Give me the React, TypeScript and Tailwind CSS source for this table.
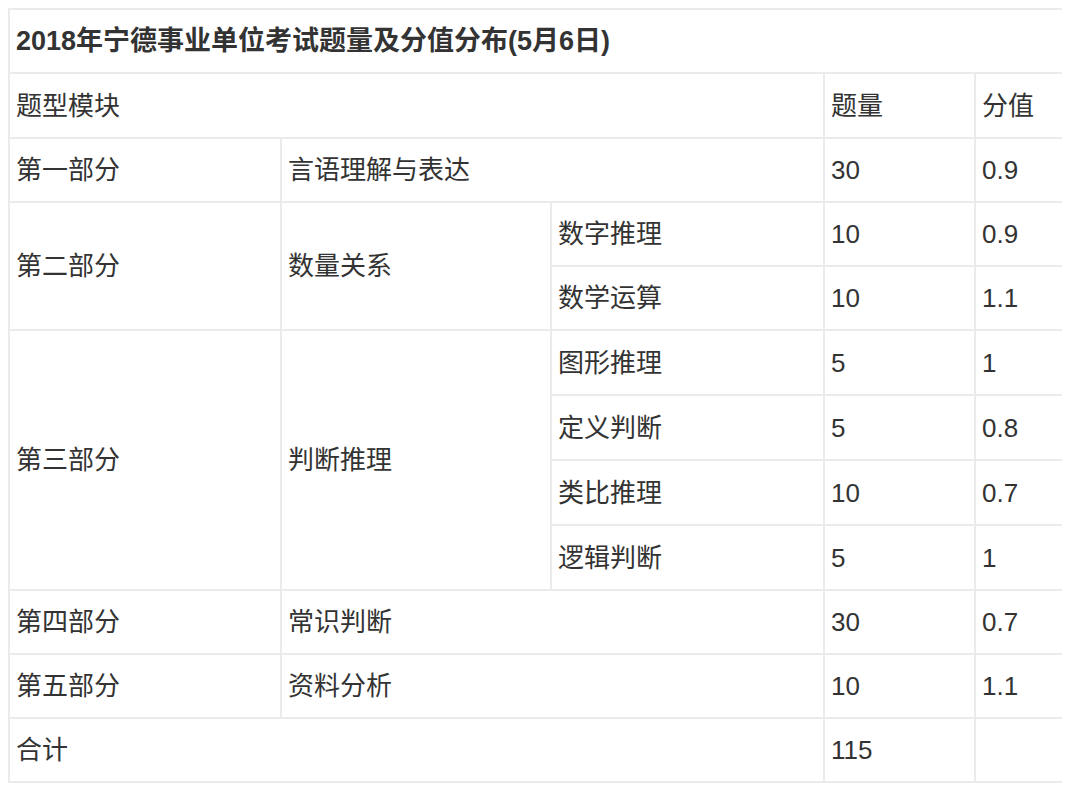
const cell = "border-2 border-[#ebebeb] px-[6px] align-middle text-left font-normal";
const last = "border-2 border-r-0 border-[#ebebeb] px-[6px] align-middle text-left font-normal";

type Row = { sub: string; count: string; score: string };

const reasoning: Row[] = [
  { sub: "图形推理", count: "5", score: "1" },
  { sub: "定义判断", count: "5", score: "0.8" },
  { sub: "类比推理", count: "10", score: "0.7" },
  { sub: "逻辑判断", count: "5", score: "1" },
];

export default function App() {
  return (
    <div className="min-h-screen bg-white pl-2 pt-2">
      <table
        className="w-[1054px] table-fixed border-collapse border-r-0 text-[26px] leading-none text-[#333333]"
        style={{ fontFamily: '"Liberation Sans", "Noto Sans CJK SC", sans-serif' }}
      >
        <colgroup>
          <col className="w-[272px]" />
          <col className="w-[270px]" />
          <col className="w-[273px]" />
          <col className="w-[151px]" />
          <col />
        </colgroup>
        <tbody>
          <tr className="h-[64px]">
            <th colSpan={5} className={`${last} !font-bold text-[27px]`}>
              2018年宁德事业单位考试题量及分值分布(5月6日)
            </th>
          </tr>
          <tr className="h-[65px]">
            <td colSpan={3} className={cell}>题型模块</td>
            <td className={cell}>题量</td>
            <td className={last}>分值</td>
          </tr>
          <tr className="h-[64px]">
            <td className={cell}>第一部分</td>
            <td colSpan={2} className={cell}>言语理解与表达</td>
            <td className={cell}>30</td>
            <td className={last}>0.9</td>
          </tr>
          <tr className="h-[64px]">
            <td rowSpan={2} className={cell}>第二部分</td>
            <td rowSpan={2} className={cell}>数量关系</td>
            <td className={cell}>数字推理</td>
            <td className={cell}>10</td>
            <td className={last}>0.9</td>
          </tr>
          <tr className="h-[64px]">
            <td className={cell}>数学运算</td>
            <td className={cell}>10</td>
            <td className={last}>1.1</td>
          </tr>
          {reasoning.map((r, i) => (
            <tr key={r.sub} className="h-[65px]">
              {i === 0 ? (
                <>
                  <td rowSpan={4} className={cell}>第三部分</td>
                  <td rowSpan={4} className={cell}>判断推理</td>
                </>
              ) : null}
              <td className={cell}>{r.sub}</td>
              <td className={cell}>{r.count}</td>
              <td className={last}>{r.score}</td>
            </tr>
          ))}
          <tr className="h-[64px]">
            <td className={cell}>第四部分</td>
            <td colSpan={2} className={cell}>常识判断</td>
            <td className={cell}>30</td>
            <td className={last}>0.7</td>
          </tr>
          <tr className="h-[64px]">
            <td className={cell}>第五部分</td>
            <td colSpan={2} className={cell}>资料分析</td>
            <td className={cell}>10</td>
            <td className={last}>1.1</td>
          </tr>
          <tr className="h-[64px]">
            <td colSpan={3} className={cell}>合计</td>
            <td className={cell}>115</td>
            <td className={last}></td>
          </tr>
        </tbody>
      </table>
    </div>
  );
}
